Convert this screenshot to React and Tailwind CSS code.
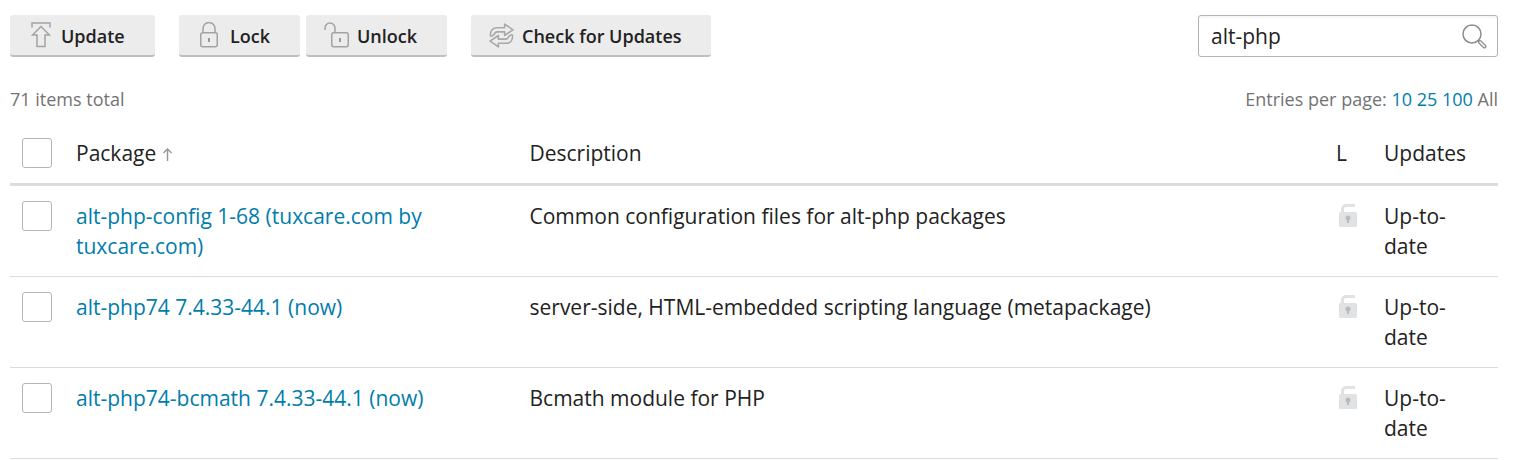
import React from 'react';

const rows = [
  { name: 'alt-php-config 1-68 (tuxcare.com by tuxcare.com)', description: 'Common configuration files for alt-php packages' },
  { name: 'alt-php74 7.4.33-44.1 (now)', description: 'server-side, HTML-embedded scripting language (metapackage)' },
  { name: 'alt-php74-bcmath 7.4.33-44.1 (now)', description: 'Bcmath module for PHP' },
];

const UpdateIcon = () => (
  <svg width="20" height="26" viewBox="0 0 20 26" fill="none" stroke="#a3a3a3" strokeWidth="1.5">
    <path d="M1 5.5V1h18v4.500" />
    <path d="M10 4.5 1.5 13H6V24.5h8V13h4.500Z" fill="#ececec" />
  </svg>
);

const LockIcon = () => (
  <svg width="20" height="26" viewBox="0 0 20 26" fill="none">
    <path d="M4 11V6.5a6 6 0 0 1 12 0V11" stroke="#a3a3a3" strokeWidth="1.5" />
    <rect x="1.75" y="10.75" width="16.5" height="14" rx="2" stroke="#a3a3a3" strokeWidth="1.5" />
    <path d="M9 16h2v4H9z" fill="#999999" />
  </svg>
);

const UnlockIcon = () => (
  <svg width="26" height="26" viewBox="0 0 26 26" fill="none">
    <path d="M1 8V6a5 5 0 0 1 10 0v5" stroke="#a3a3a3" strokeWidth="1.5" />
    <rect x="7.75" y="10.75" width="16.5" height="14" rx="2" stroke="#a3a3a3" strokeWidth="1.5" />
    <path d="M15 16h2v4h-2z" fill="#999999" />
  </svg>
);

const RefreshIcon = () => (
  <svg width="25" height="25" viewBox="0 0 24 24" fill="none" stroke="#a8a8a8" strokeWidth="1.5" strokeLinejoin="round">
    <path d="M1.500 12.500C1 8 3 4.500 7.500 4.500H15V1L23 6.500L15 12V8.500H8C6.500 8.500 5.500 9.500 5 11L3 12.500Z" />
    <path d="M22.500 11.500C23 16 21 19.500 16.500 19.500H9V23L1 17.500L9 12V15.500H16C17.500 15.500 18.500 14.500 19 13L21 11.500Z" />
  </svg>
);

const SearchIcon = () => (
  <svg width="25" height="25" viewBox="0 0 25 25" fill="none" stroke="#8c8c8c">
    <circle cx="10" cy="10" r="9" strokeWidth="1.5" />
    <path d="m16.500 16.500 1.500 1.500" strokeWidth="1.5" />
    <path d="m18 18 4.500 4.500" strokeWidth="4" strokeLinecap="round" />
    <path d="m18 18 4.500 4.500" stroke="#ffffff" strokeWidth="1.500" strokeLinecap="round" />
  </svg>
);

const RowLockIcon = () => (
  <svg width="18" height="23" viewBox="0 0 18 23">
    <path d="M3.500 9V5a3.500 3.500 0 0 1 3.500-3.500H16" fill="none" stroke="#e0e2e4" strokeWidth="3" />
    <rect x="0" y="8" width="18" height="15" rx="1.500" fill="#e0e2e4" />
    <circle cx="9" cy="14" r="2.500" fill="#b8bcc0" />
    <path d="M8 14h2v5H8z" fill="#b8bcc0" />
  </svg>
);

const SortArrow = () => (
  <svg width="9" height="13" viewBox="0 0 9 13" fill="none" stroke="#999999" strokeWidth="1.5" className="ml-[7px] mt-[3px]">
    <path d="M4.500 13V1" />
    <path d="M.5 5 4.500 1l4 4" />
  </svg>
);

const ToolbarButton = ({ icon, label, className }) => (
  <button className={`flex h-[42px] items-center rounded-[3px] border-b-2 border-[#bfbfbf] bg-[#ececec] text-[18px] font-semibold text-[#222222] ${className}`}>
    {icon}
    <span className="mt-[2px]">{label}</span>
  </button>
);

const Checkbox = () => (
  <span className="block h-[30px] w-[30px] rounded-[3px] border border-[#b5b5b5] bg-white" />
);

const App = () => {
  return (
    <div className="h-[460px] w-[1520px] overflow-hidden bg-white px-[10px] pt-[15px] pr-[22px] font-['Open_Sans',sans-serif] text-[21px] leading-[30px] text-[#222222]">
      {/* Toolbar */}
      <div className="flex items-start">
        <ToolbarButton icon={<UpdateIcon />} label="Update" className="w-[145px] gap-[10px] pl-[21px]" />
        <ToolbarButton icon={<LockIcon />} label="Lock" className="ml-[24px] w-[121px] gap-[11px] pl-[20px]" />
        <ToolbarButton icon={<UnlockIcon />} label="Unlock" className="ml-[6px] w-[141px] gap-[7px] pl-[18px]" />
        <ToolbarButton icon={<RefreshIcon />} label="Check for Updates" className="ml-[24px] w-[240px] gap-[8px] pl-[18px]" />
        <div className="ml-auto flex h-[42px] w-[300px] items-center justify-between rounded-[3px] border border-[#b5b5b5] pr-[10px] pl-[12px] shadow-[inset_0_2px_2px_rgba(0,0,0,0.04)]">
          <span>alt-php</span>
          <SearchIcon />
        </div>
      </div>

      {/* Totals */}
      <div className="mt-[29px] flex h-[26px] items-center justify-between text-[18px] text-[#737373]">
        <span>71 items total</span>
        <span>
          Entries per page: <span className="text-[#007dab]">10 25 100</span> All
        </span>
      </div>

      {/* Header */}
      <div className="flex h-[74px] items-center border-b-[3px] border-[#dcdcdc] pt-[10px]">
        <div className="w-[66px] pl-[12px]"><Checkbox /></div>
        <div className="flex w-[453.5px] items-center">
          Package <SortArrow />
        </div>
        <div className="w-[806.5px]">Description</div>
        <div className="w-[48px]">L</div>
        <div>Updates</div>
      </div>

      {/* Rows */}
      {rows.map((row) => (
        <div key={row.name} className="flex border-b border-[#dcdcdc] py-[15px]">
          <div className="w-[66px] pl-[12px]"><Checkbox /></div>
          <div className="w-[453.5px] pr-[90px] text-[#007dab]">{row.name}</div>
          <div className="w-[806.5px]">{row.description}</div>
          <div className="w-[48px] pt-[3px] pl-[3px]"><RowLockIcon /></div>
          <div className="w-[80px] pr-[10px]">Up-to-date</div>
        </div>
      ))}
    </div>
  );
};

export default App;
